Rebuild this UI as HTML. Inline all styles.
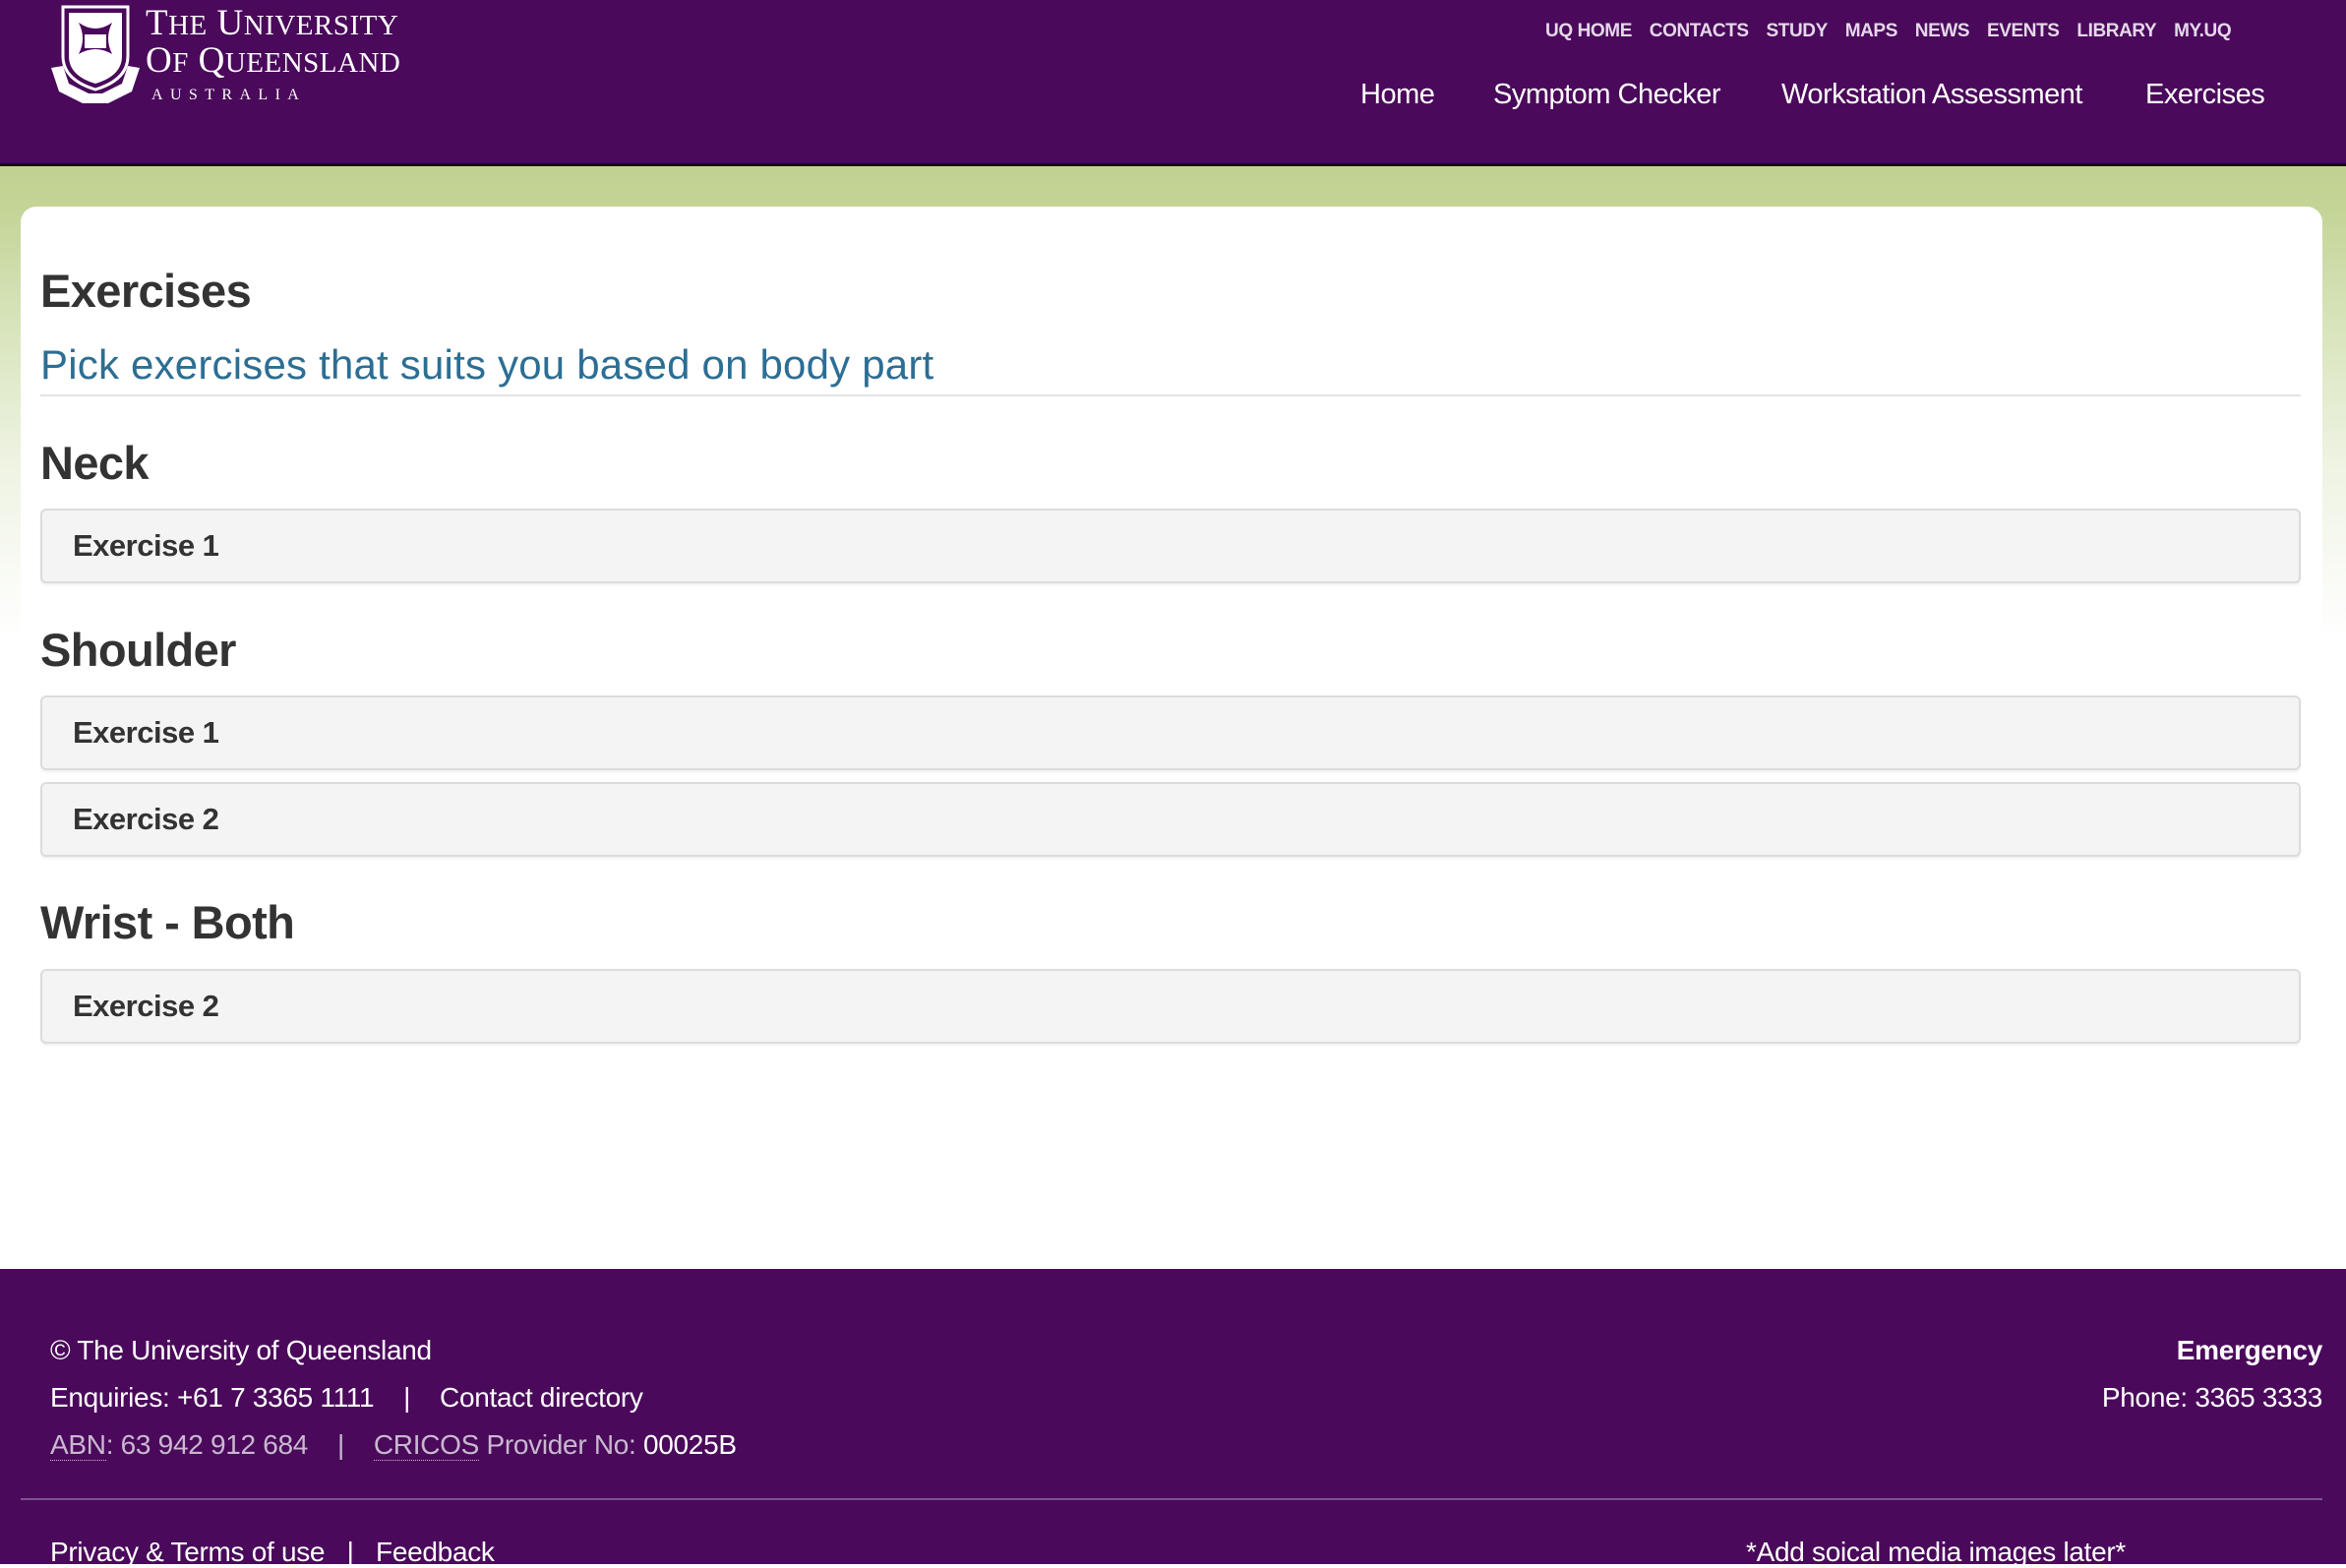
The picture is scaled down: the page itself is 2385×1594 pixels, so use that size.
<!DOCTYPE html>
<html><head><meta charset="utf-8"><style>
*{margin:0;padding:0;box-sizing:border-box}
body{width:2385px;height:1590px;overflow:hidden;font-family:"Liberation Sans",sans-serif;background:#fff;position:relative;color:#333}
.hdr{position:absolute;left:0;top:0;width:2385px;height:169px;background:#4a095b;border-bottom:3px solid #1a0a1a}
.bg{position:absolute;left:0;top:169px;width:2385px;height:500px;background:linear-gradient(#c0d292 0px,#c3d496 40px,#d6e3b8 150px,#eef3e2 300px,#fff 480px)}
.panel{position:absolute;left:21px;top:210px;width:2340px;height:1080px;background:#fff;border-radius:16px 16px 0 0}
.abs{position:absolute;white-space:nowrap}
.top a{color:#e5d8ea;font-weight:bold;font-size:19px;letter-spacing:-0.4px}
.nav{color:#fff;font-size:29px;letter-spacing:-0.5px}
h2{position:absolute;font-size:47px;font-weight:bold;color:#333;letter-spacing:-0.6px;left:41px;white-space:nowrap}
.box{position:absolute;left:41px;width:2298px;height:76px;background:#f4f4f4;border:2px solid #dcdcdc;border-radius:6px;box-shadow:0 2px 2px rgba(0,0,0,.06);font-size:31px;font-weight:bold;padding-left:31px;line-height:72px;color:#333;letter-spacing:-0.5px}
.ft{position:absolute;left:0;top:1290px;width:2385px;height:300px;background:#4a095b}
.ft .abs{font-size:28px;color:#fff;letter-spacing:-0.3px}
</style></head><body>
<div class="hdr">
<svg class="abs" style="left:50px;top:5px" width="94" height="102" viewBox="0 0 94 102">
<path d="M14 2 H80 V52 Q80 76 47 86 Q14 76 14 52 Z" fill="none" stroke="#fff" stroke-width="3"/>
<path d="M20 8 H74 V52 Q74 72 47 80 Q20 72 20 52 Z" fill="#fff"/>
<path d="M30 14 Q47 26 64 14 Q56 30 64 46 Q47 36 30 46 Q38 30 30 14Z" fill="#4a095b" transform="translate(0,4)"/>
<rect x="36" y="30" width="22" height="14" fill="#fff"/>
<path d="M2 64 L14 62 L20 80 L40 90 L54 90 L74 80 L80 62 L92 64 L84 88 L60 100 L34 100 L10 88 Z" fill="#fff"/>
</svg>
<div class="abs" style="left:148px;top:2px;font-family:'Liberation Serif',serif;font-size:37px;color:#fff;letter-spacing:0.5px">T<span style="font-size:29px">HE</span> U<span style="font-size:29px">NIVERSITY</span></div>
<div class="abs" style="left:148px;top:40px;font-family:'Liberation Serif',serif;font-size:37px;color:#fff;letter-spacing:0.5px">O<span style="font-size:29px">F</span> Q<span style="font-size:29px">UEENSLAND</span></div>
<div class="abs" style="left:154px;top:88px;font-family:'Liberation Serif',serif;font-size:16px;color:#fff;letter-spacing:7.4px">AUSTRALIA</div>
<div class="abs top" style="left:1571px;top:21px"><a>UQ HOME</a>&nbsp;&nbsp;&nbsp;&nbsp;<a>CONTACTS</a>&nbsp;&nbsp;&nbsp;&nbsp;<a>STUDY</a>&nbsp;&nbsp;&nbsp;&nbsp;<a>MAPS</a>&nbsp;&nbsp;&nbsp;&nbsp;<a>NEWS</a>&nbsp;&nbsp;&nbsp;&nbsp;<a>EVENTS</a>&nbsp;&nbsp;&nbsp;&nbsp;<a>LIBRARY</a>&nbsp;&nbsp;&nbsp;&nbsp;<a>MY.UQ</a></div>
<div class="abs nav" style="left:1383px;top:80px">Home</div>
<div class="abs nav" style="left:1518px;top:80px">Symptom Checker</div>
<div class="abs nav" style="left:1811px;top:80px">Workstation Assessment</div>
<div class="abs nav" style="left:2181px;top:80px">Exercises</div>
</div>
<div class="bg"></div>
<div class="panel"></div>
<h2 style="top:268px">Exercises</h2>
<div class="abs" style="left:41px;top:347px;font-size:42px;color:#2c6e94;letter-spacing:0.2px">Pick exercises that suits you based on body part</div>
<div class="abs" style="left:41px;top:401px;width:2298px;height:2px;background:#e3e3e3"></div>
<h2 style="top:443px">Neck</h2>
<div class="box" style="top:517px">Exercise 1</div>
<h2 style="top:633px">Shoulder</h2>
<div class="box" style="top:707px">Exercise 1</div>
<div class="box" style="top:795px">Exercise 2</div>
<h2 style="top:910px">Wrist - Both</h2>
<div class="box" style="top:985px">Exercise 2</div>
<div class="ft">
<div class="abs" style="left:51px;top:67px">© The University of Queensland</div>
<div class="abs" style="left:51px;top:115px">Enquiries: +61 7 3365 1111 &nbsp;&nbsp;&nbsp;|&nbsp;&nbsp;&nbsp; Contact directory</div>
<div class="abs" style="left:51px;top:163px;color:#c9b8d0"><span style="border-bottom:1px dotted #c9b8d0">ABN</span>: 63 942 912 684 &nbsp;&nbsp;&nbsp;|&nbsp;&nbsp;&nbsp; <span style="border-bottom:1px dotted #c9b8d0">CRICOS</span> Provider No: <span style="color:#fff">00025B</span></div>
<div class="abs" style="right:24px;top:67px;font-weight:bold">Emergency</div>
<div class="abs" style="right:24px;top:115px">Phone: 3365 3333</div>
<div class="abs" style="left:21px;top:233px;width:2340px;height:2px;background:#7c5490"></div>
<div class="abs" style="left:51px;top:272px">Privacy &amp; Terms of use &nbsp;&nbsp;|&nbsp;&nbsp; Feedback</div>
<div class="abs" style="left:1775px;top:272px">*Add soical media images later*</div>
</div>
</body></html>
